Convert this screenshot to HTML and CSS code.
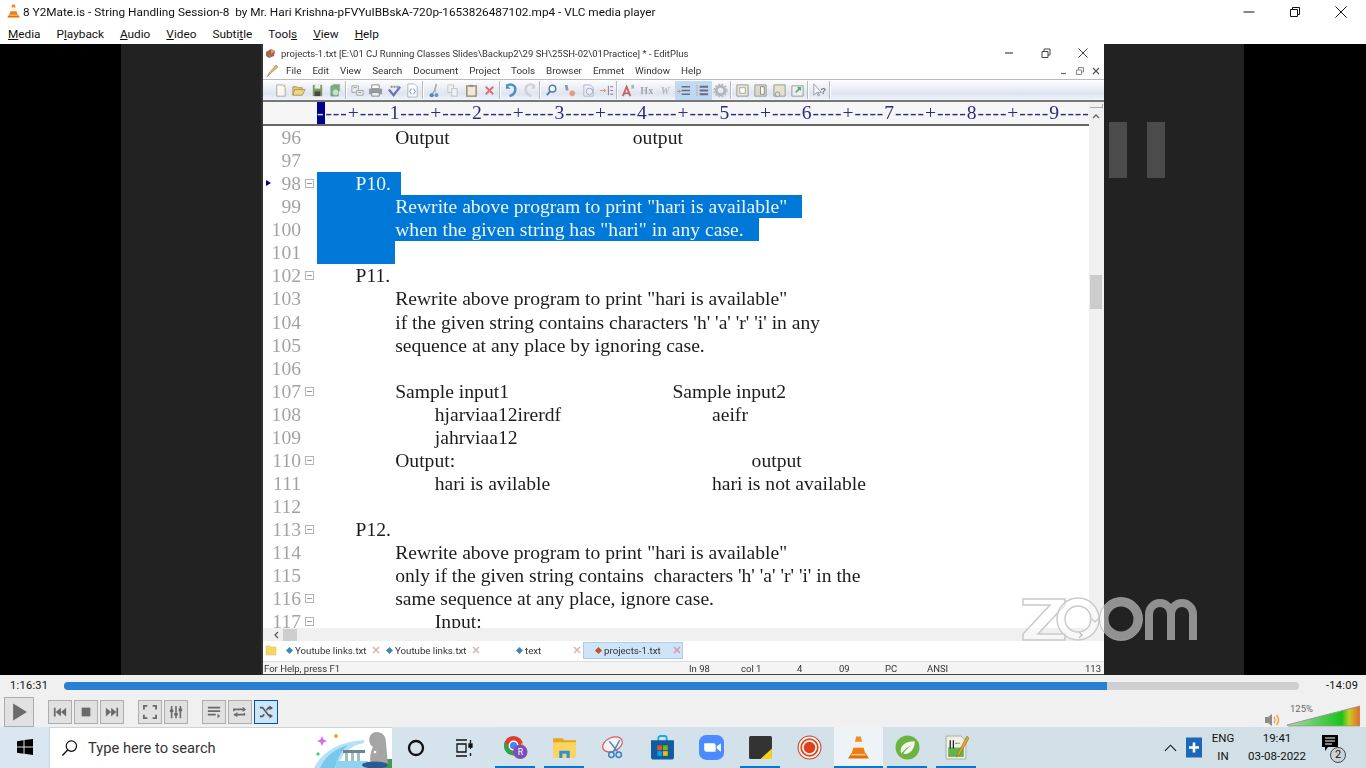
FILE: index.html
```html
<!DOCTYPE html>
<html lang="en">
<head>
<meta charset="utf-8">
<title>VLC media player</title>
<link rel="stylesheet" href="styles.css">
</head>
<body>
<svg class="defs" width="0" height="0" aria-hidden="true">
  <symbol id="vlc" viewBox="0 0 24 24">
    <path d="M9.8 1.5h4.4l1.2 5H8.6z" fill="#f28c1c"/>
    <path d="M8.3 7.5h7.4l1 4.2H7.3z" fill="#f4f1ec"/>
    <path d="M7 12.2h10l1.4 5.3H5.600z" fill="#f07d12"/>
    <path d="M5.300 17.300h13.400l3.300 5.200H2z" fill="#e66f00"/>
    <path d="M5.600 18h12.800l.8 1.600H4.800z" fill="#f6c48e"/>
  </symbol>
  <symbol id="fold" viewBox="0 0 9 9">
    <rect x=".5" y=".5" width="8" height="8" fill="#fff" stroke="#b5b5b5"/>
    <path d="M2 4.500h5" stroke="#999"/>
  </symbol>
</svg>

<header class="titlebar">
  <svg class="vlc-small"><use href="#vlc"/></svg>
  <span class="title">8 Y2Mate.is - String Handling Session-8&nbsp; by Mr. Hari Krishna-pFVYuIBBskA-720p-1653826487102.mp4 - VLC media player</span>
  <div class="winctl">
    <svg viewBox="0 0 12 12"><path d="M.5 6h11" stroke="#111"/></svg>
    <svg viewBox="0 0 12 12" fill="none" stroke="#111"><path d="M1.500 3.500h7v7h-7zM3.500 3.500v-2h7v7h-2"/></svg>
    <svg viewBox="0 0 12 12"><path d="M.5.500l11 11M11.500.500l-11 11" stroke="#111"/></svg>
  </div>
</header>

<nav class="menubar">
  <span><u>M</u>edia</span><span>P<u>l</u>ayback</span><span><u>A</u>udio</span><span><u>V</u>ideo</span><span>Subti<u>t</u>le</span><span>Tool<u>s</u></span><span><u>V</u>iew</span><span><u>H</u>elp</span>
</nav>

<main class="video">
  <div class="pillar"></div>
  <div class="band"></div>

  <section class="editor">
    <div class="ep-title">
      <svg class="ep-ico" viewBox="0 0 12 12"><path d="M1 5l5-3 4 2-1 5-5 2-3-2z" fill="#b9584e"/><path d="M6 2l4 2-4 3z" fill="#d9a05c"/><path d="M2 9l3-2 1 3z" fill="#5f9a57"/></svg>
      <span class="ep-title-text">projects-1.txt [E:\01 CJ Running Classes Slides\Backup2\29 SH\25SH-02\01Practice] * - EditPlus</span>
      <div class="ep-ctl">
        <svg viewBox="0 0 10 10"><path d="M1 5h8" stroke="#444" stroke-width="1.200"/></svg>
        <svg viewBox="0 0 10 10" fill="none" stroke="#444"><path d="M1 3.500h6v6H1zM3 3.500V1h6v6H7"/></svg>
        <svg viewBox="0 0 10 10"><path d="M.5.500l9 9M9.500.500l-9 9" stroke="#444"/></svg>
      </div>
    </div>
    <div class="ep-menu">
      <svg class="pencil" viewBox="0 0 14 14"><path d="M1 13l2-4 7-8 2 2-8 7z" fill="#d8c36a" stroke="#8a8460" stroke-width=".6"/></svg>
      <span>File</span><span>Edit</span><span>View</span><span>Search</span><span>Document</span><span>Project</span><span>Tools</span><span>Browser</span><span>Emmet</span><span>Window</span><span>Help</span>
      <div class="mdi">
        <svg viewBox="0 0 8 8"><path d="M1 6.500h5" stroke="#666" stroke-width="1.200"/></svg>
        <svg viewBox="0 0 8 8" fill="none" stroke="#888"><path d="M.5 3h5v4.500h-5zM2.500 3V.5h5v4.500h-2"/></svg>
        <svg viewBox="0 0 8 8"><path d="M1 1l6 6M7 1L1 7" stroke="#555" stroke-width="1.200"/></svg>
      </div>
    </div>

    <div class="ep-tools">
      <i class="t"><svg viewBox="0 0 16 16"><path d="M4 2h6l3 3v9H4z" fill="#fffdf0" stroke="#999"/><path d="M11 1l1 1 2-1-1 2 1 1-2 0z" fill="#e8b83a"/></svg></i>
      <i class="t"><svg viewBox="0 0 16 16"><path d="M2 13V4h4l1 1h5v2" fill="#e7c25c" stroke="#a58535"/><path d="M2 13l2-6h11l-3 6z" fill="#f1d377" stroke="#a58535"/></svg></i>
      <i class="t"><svg viewBox="0 0 16 16"><path d="M3 2h10v12H3z" fill="#6c8a4c"/><path d="M5 2h6v4H5z" fill="#e9efe0"/><path d="M5 9h6v5H5z" fill="#2b2b2b"/></svg></i>
      <i class="t"><svg viewBox="0 0 16 16"><path d="M5 1h8v8H5z" fill="#86b58a"/><path d="M3 3h8v11H3z" fill="#6aa274" stroke="#3f7550" stroke-width=".5"/><circle cx="8" cy="10" r="3" fill="#c3e0c5"/></svg></i>
      <b class="s"></b>
      <i class="t"><svg viewBox="0 0 16 16" fill="#eee" stroke="#999"><path d="M2 3h7v7H2z"/><path d="M7 8h7v5H7z"/><path d="M4 5h3M9 10h3" stroke="#777"/></svg></i>
      <i class="t"><svg viewBox="0 0 16 16"><path d="M4 2h8v4H4z" fill="#fff" stroke="#777"/><path d="M1 6h14v6H1z" fill="#8a8f96"/><path d="M4 10h8v4H4z" fill="#eee" stroke="#777"/></svg></i>
      <i class="t"><svg viewBox="0 0 16 16"><path d="M2 7l5 6 7-9" fill="none" stroke="#5262a8" stroke-width="2.400"/><path d="M4 4h8" stroke="#777" stroke-width="2" stroke-dasharray="2 1"/></svg></i>
      <i class="t"><svg viewBox="0 0 16 16"><path d="M3 1h7l3 3v11H3z" fill="#fff" stroke="#aaa"/><path d="M7 6L5 9l2 3M9 6l2 3-2 3" fill="none" stroke="#3c78b4"/></svg></i>
      <b class="s"></b>
      <i class="t"><svg viewBox="0 0 16 16"><path d="M10 1L8 8l-3 5" stroke="#999" stroke-width="1.500" fill="none"/><path d="M10 1l-1 8 2 5" stroke="#aab" fill="none"/><circle cx="5" cy="13" r="2.200" fill="#3b72b8"/><circle cx="10" cy="13" r="2" fill="#4a84c8"/></svg></i>
      <i class="t"><svg viewBox="0 0 16 16" fill="#f3f3f3" stroke="#bbb"><path d="M3 2h6v8H3z"/><path d="M7 6h6v8H7z"/></svg></i>
      <i class="t"><svg viewBox="0 0 16 16"><path d="M3 3h10v11H3z" fill="#efe9da" stroke="#8c6d3f" stroke-width="1.400"/><path d="M6 2h4v2H6z" fill="#777"/></svg></i>
      <i class="t"><svg viewBox="0 0 16 16"><path d="M4 4l8 8M12 4l-8 8" stroke="#d85a5a" stroke-width="2"/></svg></i>
      <b class="s"></b>
      <i class="t"><svg viewBox="0 0 16 16"><path d="M3 3c4-3 10-1 9 5-.5 3-3 5-6 6" fill="none" stroke="#2f7fbd" stroke-width="2.600"/><path d="M2 1v5h5z" fill="#2f7fbd"/></svg></i>
      <i class="t"><svg viewBox="0 0 16 16"><path d="M13 3C9 0 3 2 4 8c.5 3 3 5 6 6" fill="none" stroke="#ccc" stroke-width="2.600"/><path d="M14 1v5H9z" fill="#ccc"/></svg></i>
      <b class="s"></b>
      <i class="t"><svg viewBox="0 0 16 16"><circle cx="9" cy="6" r="3.500" fill="#fff" stroke="#2f6f9c" stroke-width="1.600"/><path d="M6.500 9L3 13" stroke="#2f6f9c" stroke-width="2"/></svg></i>
      <i class="t"><svg viewBox="0 0 16 16"><path d="M3 2h3l1 6H4z" fill="#889" /><circle cx="11" cy="11" r="3" fill="#e89070"/></svg></i>
      <i class="t"><svg viewBox="0 0 16 16"><path d="M3 2h7l3 3v9H3z" fill="#eef" stroke="#aab"/><circle cx="9" cy="9" r="3.500" fill="none" stroke="#99a"/></svg></i>
      <i class="t"><svg viewBox="0 0 16 16"><path d="M1 8h6M5 6l2 2-2 2" stroke="#e07a3a" fill="none"/><path d="M10 3v10M12 4h3M12 8h3M12 12h3" stroke="#667" /></svg></i>
      <b class="s"></b>
      <i class="t"><svg viewBox="0 0 16 16"><path d="M2 14L6 4l4 10M3.500 11h5" fill="none" stroke="#c14b4b" stroke-width="2"/><path d="M11 2h3v4h-3z" fill="#9ab"/></svg></i>
      <i class="t tx">Hx</i>
      <i class="t tx tw">W</i>
      <i class="t on"><svg viewBox="0 0 16 16"><path d="M6 4h9M6 8h9M6 12h9" stroke="#556" stroke-width="1.400"/><path d="M1 9h4M3 7l2 2-2 2" stroke="#e07a3a" fill="none"/></svg></i>
      <i class="t on"><svg viewBox="0 0 16 16"><path d="M2 2v12" stroke="#e07a3a" stroke-dasharray="1.500 1"/><path d="M5 3h9v2H5zM5 7h9v2H5zM5 11h9v2H5z" fill="#556"/></svg></i>
      <i class="t"><svg viewBox="0 0 16 16"><circle cx="8" cy="8" r="4.500" fill="none" stroke="#a8adb3" stroke-width="3"/><circle cx="8" cy="8" r="6.800" fill="none" stroke="#a8adb3" stroke-width="1.400" stroke-dasharray="2 1.600"/></svg></i>
      <b class="s"></b>
      <i class="t"><svg viewBox="0 0 16 16"><path d="M2 2h12v12H2z" fill="#e9e6c8" stroke="#888"/><path d="M5 5h6v6H5z" fill="#fff" stroke="#999"/></svg></i>
      <i class="t"><svg viewBox="0 0 16 16"><path d="M2 2h12v12H2z" fill="#d8d8b8" stroke="#888"/><path d="M8 4h4v8H8z" fill="#fff" stroke="#777"/></svg></i>
      <i class="t"><svg viewBox="0 0 16 16"><path d="M2 2h12v12H2z" fill="#e5e2c2" stroke="#888"/><circle cx="6" cy="12" r="2.500" fill="#ddd" stroke="#888"/></svg></i>
      <i class="t"><svg viewBox="0 0 16 16"><path d="M2 3h12v11H2z" fill="#f0f0f0" stroke="#888"/><path d="M6 10l5-5M8 5h3v3" stroke="#36a048" stroke-width="1.600" fill="none"/></svg></i>
      <b class="s"></b>
      <i class="t"><svg viewBox="0 0 16 16"><path d="M2 1v12l3-3 2 4 1-1-2-3h4z" fill="#fff" stroke="#889"/><text x="9" y="12" class="q">?</text></svg></i>
      <b class="s"></b>
    </div>

    <div class="ep-ruler">
      <div class="ruler-main"><div class="ruler-text"><span class="caret">-</span>---+----1----+----2----+----3----+----4----+----5----+----6----+----7----+----8----+----9----</div></div>
      <div class="ruler-side">
        <i class="side-tab"></i>
        <svg class="arrow" viewBox="0 0 8 6"><path d="M1 5l3-3 3 3" fill="none" stroke="#666" stroke-width="1.300"/></svg>
      </div>
    </div>

    <div class="ep-body">
      <div class="code">
        <div class="row"><span class="num">96</span><span class="fd"></span><span class="txt">&#9;&#9;Output&#9;&#9;&#9;&#9;&#9;output</span></div>
        <div class="row"><span class="num">97</span><span class="fd"></span><span class="txt"></span></div>
        <div class="row"><span class="num mark">98</span><span class="fd"><svg><use href="#fold"/></svg></span><span class="txt"><span class="sel s1">&#9;P10.</span></span></div>
        <div class="row"><span class="num">99</span><span class="fd"></span><span class="txt"><span class="sel s2">&#9;&#9;Rewrite above program to print "hari is available"</span></span></div>
        <div class="row"><span class="num">100</span><span class="fd"></span><span class="txt"><span class="sel s2">&#9;&#9;when the given string has "hari" in any case.</span></span></div>
        <div class="row"><span class="num">101</span><span class="fd"></span><span class="txt"><span class="sel">&#9;&#9;</span></span></div>
        <div class="row"><span class="num">102</span><span class="fd"><svg><use href="#fold"/></svg></span><span class="txt">&#9;P11.</span></div>
        <div class="row"><span class="num">103</span><span class="fd"></span><span class="txt">&#9;&#9;Rewrite above program to print "hari is available"</span></div>
        <div class="row"><span class="num">104</span><span class="fd"></span><span class="txt">&#9;&#9;if the given string contains characters 'h' 'a' 'r' 'i' in any</span></div>
        <div class="row"><span class="num">105</span><span class="fd"></span><span class="txt">&#9;&#9;sequence at any place by ignoring case.</span></div>
        <div class="row"><span class="num">106</span><span class="fd"></span><span class="txt"></span></div>
        <div class="row"><span class="num">107</span><span class="fd"><svg><use href="#fold"/></svg></span><span class="txt">&#9;&#9;Sample input1&#9;&#9;&#9;&#9;&#9;Sample input2</span></div>
        <div class="row"><span class="num">108</span><span class="fd"></span><span class="txt">&#9;&#9;&#9;hjarviaa12irerdf&#9;&#9;&#9;&#9;aeifr</span></div>
        <div class="row"><span class="num">109</span><span class="fd"></span><span class="txt">&#9;&#9;&#9;jahrviaa12</span></div>
        <div class="row"><span class="num">110</span><span class="fd"><svg><use href="#fold"/></svg></span><span class="txt">&#9;&#9;Output:&#9;&#9;&#9;&#9;&#9;&#9;&#9;&#9;output</span></div>
        <div class="row"><span class="num">111</span><span class="fd"></span><span class="txt">&#9;&#9;&#9;hari is avilable&#9;&#9;&#9;&#9;&#9;hari is not available</span></div>
        <div class="row"><span class="num">112</span><span class="fd"></span><span class="txt"></span></div>
        <div class="row"><span class="num">113</span><span class="fd"><svg><use href="#fold"/></svg></span><span class="txt">&#9;P12.</span></div>
        <div class="row"><span class="num">114</span><span class="fd"></span><span class="txt">&#9;&#9;Rewrite above program to print "hari is available"</span></div>
        <div class="row"><span class="num">115</span><span class="fd"></span><span class="txt">&#9;&#9;only if the given string contains&nbsp; characters 'h' 'a' 'r' 'i' in the</span></div>
        <div class="row"><span class="num">116</span><span class="fd"><svg><use href="#fold"/></svg></span><span class="txt">&#9;&#9;same sequence at any place, ignore case.</span></div>
        <div class="row"><span class="num">117</span><span class="fd"><svg><use href="#fold"/></svg></span><span class="txt">&#9;&#9;&#9;Input:</span></div>
      </div>
      <div class="vscroll">
        <div class="vthumb"></div>
        <svg class="arrow down" viewBox="0 0 8 6"><path d="M1 1l3 3 3-3" fill="none" stroke="#888" stroke-width="1.200"/></svg>
      </div>
    </div>

    <div class="hscroll">
      <svg class="harrow" viewBox="0 0 6 8"><path d="M5 1L2 4l3 3" fill="none" stroke="#555" stroke-width="1.200"/></svg>
      <div class="hthumb"></div>
      <svg class="harrow right" viewBox="0 0 6 8"><path d="M1 1l3 3-3 3" fill="none" stroke="#777" stroke-width="1.200"/></svg>
    </div>

    <div class="ep-tabs">
      <svg class="tabfolder" viewBox="0 0 12 12"><path d="M1 11V2h4l1 1h5v8z" fill="#f4d766" stroke="#d9b94a" stroke-width=".5"/></svg>
      <div class="tab t1"><i class="dia"></i><span>Youtube links.txt</span><svg class="x" viewBox="0 0 8 8"><path d="M1 1l6 6M7 1L1 7" stroke="#dcb4b4" stroke-width="1.600"/></svg></div>
      <div class="tab t2"><i class="dia"></i><span>Youtube links.txt</span><svg class="x" viewBox="0 0 8 8"><path d="M1 1l6 6M7 1L1 7" stroke="#dcb4b4" stroke-width="1.600"/></svg></div>
      <div class="tab t3"><i class="dia"></i><span>text</span><svg class="x" viewBox="0 0 8 8"><path d="M1 1l6 6M7 1L1 7" stroke="#dcb4b4" stroke-width="1.600"/></svg></div>
      <div class="tab t4"><i class="dia red"></i><span>projects-1.txt</span><svg class="x" viewBox="0 0 8 8"><path d="M1 1l6 6M7 1L1 7" stroke="#d99aa8" stroke-width="1.600"/></svg></div>
    </div>

    <div class="ep-status">
      <span class="help">For Help, press F1</span>
      <span class="c c1">In 98</span><span class="c c2">col 1</span><span class="c c3">4</span><span class="c c4">09</span><span class="c c5">PC</span><span class="c c6">ANSI</span><span class="c c7"></span><span class="c c8">113</span>
    </div>
  </section>

  <div class="band band-r">
    <i class="pausebar"></i><i class="pausebar"></i>
  </div>
  <div class="pillar pillar-r"></div>

  <svg class="zoomlogo" viewBox="0 0 178 46">
    <path d="M2 2h42v6L17 37h27v6H2v-6L29 8H2z" fill="#fff" fill-opacity=".45" stroke="#c9c9c9" stroke-width="1.500"/>
    <circle cx="57" cy="22" r="17" fill="none" stroke="#fff" stroke-opacity=".5" stroke-width="8"/>
    <circle cx="57" cy="22" r="21" fill="none" stroke="#c9c9c9" stroke-width="1.400"/>
    <circle cx="57" cy="22" r="13" fill="none" stroke="#c9c9c9" stroke-width="1.400"/>
    <circle cx="100" cy="22" r="17" fill="none" stroke="#fff" stroke-opacity=".5" stroke-width="9"/>
    <circle cx="100" cy="22" r="21.500" fill="none" stroke="#aaa" stroke-opacity=".7" stroke-width="1"/>
    <path d="M128 43V17a11 11 0 0 1 22 0v26M150 17a11 11 0 0 1 22 0v26" fill="none" stroke="#909090" stroke-width="8"/>
  </svg>
</main>

<section class="controls">
  <div class="seek">
    <span class="time">1:16:31</span>
    <div class="bar"><div class="bar-fill"></div></div>
    <span class="time remain">-14:09</span>
  </div>
  <div class="btns">
    <button class="b play"><svg viewBox="0 0 16 16"><path d="M2 0l13 8-13 8z" fill="#6a6a6a"/></svg></button>
    <div class="grp">
      <button class="b"><svg viewBox="0 0 16 16"><path d="M1 3h2v10H1zM9 3v10L3 8zM15 3v10L9 8z" fill="#6a6a6a"/></svg></button>
      <button class="b"><svg viewBox="0 0 16 16"><path d="M3 3h10v10H3z" fill="#6a6a6a"/></svg></button>
      <button class="b"><svg viewBox="0 0 16 16"><path d="M13 3h2v10h-2zM1 3v10l6-5zM7 3v10l6-5z" fill="#6a6a6a"/></svg></button>
    </div>
    <div class="grp">
      <button class="b"><svg viewBox="0 0 16 16"><path d="M1 5V1h4M11 1h4v4M15 11v4h-4M5 15H1v-4" fill="none" stroke="#6a6a6a" stroke-width="2.200"/></svg></button>
      <button class="b"><svg viewBox="0 0 16 16"><path d="M3 1v14M8 1v14M13 1v14" stroke="#6a6a6a" stroke-width="1.800"/><path d="M1 5h4v3H1zM6 9h4v3H6zM11 4h4v3h-4z" fill="#6a6a6a"/></svg></button>
    </div>
    <div class="grp">
      <button class="b"><svg viewBox="0 0 16 16"><path d="M1 3h14M1 7h14M1 11h9" stroke="#6a6a6a" stroke-width="1.800"/><path d="M12 10v5l3-2.500z" fill="#6a6a6a"/></svg></button>
      <button class="b"><svg viewBox="0 0 16 16"><path d="M1 7V5h11M1 11h12V9" fill="none" stroke="#6a6a6a" stroke-width="1.800"/><path d="M11 2l4 3-4 3zM5 8l-4 3 4 3z" fill="#6a6a6a"/></svg></button>
      <button class="b active"><svg viewBox="0 0 16 16"><path d="M1 3h3l7 9h2M1 13h3l2-2.500M8.500 6L11 3h2" fill="none" stroke="#555" stroke-width="1.800"/><path d="M12 .5l4 3-4 2.500zM12 10l4 2.500-4 3z" fill="#555"/></svg></button>
    </div>
    <div class="vol">
      <svg class="spk" viewBox="0 0 16 16"><path d="M1 5h3l4-3v12l-4-3H1z" fill="#8c8c8c"/><path d="M10 5c1.500 2 1.500 4 0 6M12.500 3c2.500 3 2.500 7 0 10" fill="none" stroke="#f19a2a" stroke-width="1.300"/></svg>
      <div class="volbar"><span class="volpct">125%</span><svg class="voltri" viewBox="0 0 73 22" preserveAspectRatio="none">
        <defs><linearGradient id="vg" x1="0" x2="1" y1="0" y2="0"><stop offset="0" stop-color="#a9dcab"/><stop offset=".75" stop-color="#1cc21c"/><stop offset=".85" stop-color="#c2cf24"/><stop offset="1" stop-color="#f0641e"/></linearGradient></defs>
        <path d="M0 20L73 1v20H1z" fill="url(#vg)" stroke="#999"/></svg></div>
    </div>
  </div>
</section>

<footer class="taskbar">
  <div class="start"><svg viewBox="0 0 16 16"><path d="M0 2.300l6.500-1v6.300H0zM7.500 1.100L16 0v7.600H7.500zM0 8.500h6.500v6.200l-6.500-1zM7.500 8.500H16V16l-8.500-1.200z" fill="#000"/></svg></div>
  <div class="search">
    <svg class="glass" viewBox="0 0 18 18"><circle cx="11" cy="7" r="5.500" fill="none" stroke="#111" stroke-width="1.300"/><path d="M7 11.200L1.500 17" stroke="#111" stroke-width="1.500"/></svg>
    <span class="search-text">Type here to search</span>
    <svg class="banner" viewBox="0 0 78 40">
      <path d="M0 40C8 24 24 14 50 12v3C34 18 26 28 24 40z" fill="#b4e2f4"/>
      <path d="M6 40c5-11 14-19 28-23-7 6-11 14-13 23z" fill="#78c8ee"/>
      <path d="M8 8l1.500 3.500L13 13l-3.500 1.500L8 18l-1.500-3.500L3 13l3.500-1.500z" fill="#d46df0"/>
      <circle cx="22" cy="8" r="2" fill="#f5a623"/><circle cx="4" cy="26" r="1.700" fill="#55d07c"/>
      <path d="M29 22h22v3H29z" fill="#6d8593"/><path d="M31 25h3v8h-3zM37 25h3v8h-3zM43 25h3v8h-3z" fill="#a7bbc6"/>
      <path d="M22 33h32v7H22z" fill="#8fd3f0"/>
      <path d="M66 31h12v9H66z" fill="#3f9a52"/>
      <path d="M57 37c-2-8 0-14 2-18-3-2-5-6-3-11 2-4 7-5 11-3 4 2 5 6 5 10l2 22z" fill="#a5a5a5"/>
      <ellipse cx="61" cy="37" rx="13" ry="3.500" fill="#2c5a92"/><circle cx="61" cy="24" r="1.300" fill="#fff"/>
    </svg>
  </div>
  <div class="slot wide"><svg class="ring" viewBox="0 0 18 18"><circle cx="9" cy="9" r="7" fill="none" stroke="#111" stroke-width="2.300"/></svg></div>
  <div class="slot wide"><svg class="ticon" viewBox="0 0 18 18" fill="none" stroke="#111" stroke-width="1.300"><path d="M1 1h11M1 17h11M2 5h9v8H2z"/><path d="M15.500 1v3M15.500 14v3M15.500 8v2" stroke-width="1.300"/><path d="M14 5h3v3h-3z" fill="#111"/></svg></div>
  <div class="apps">
    <div class="slot u">
      <svg viewBox="0 0 26 26"><circle cx="11" cy="11" r="10" fill="#e33b2e"/><path d="M20 7a10 10 0 0 1-7 13.800L17 13z" fill="#f9c513"/><path d="M13 21A10 10 0 0 1 2.300 6.500L7 14z" fill="#2fa44f"/><circle cx="11" cy="11" r="4.500" fill="#4285f4" stroke="#fff" stroke-width="1.500"/><circle cx="18" cy="17.500" r="7.500" fill="#7b4fb5"/><text x="18" y="21" class="badge">R</text></svg>
    </div>
    <div class="slot u">
      <svg viewBox="0 0 24 24"><path d="M1 3h9l2 2h11v3H1z" fill="#e5a620"/><path d="M1 7h22v15H1z" fill="#fcd462"/><path d="M7 15h10v7h-3v-4h-4v4H7z" fill="#2f8fd8"/></svg>
    </div>
    <div class="slot">
      <svg viewBox="0 0 24 24"><ellipse cx="11" cy="9" rx="10" ry="6.500" fill="#f3f3f3" stroke="#e15a5a" stroke-width="1.200" transform="rotate(-25 11 9)"/><path d="M8 6l8 10M18 5l-6 11" stroke="#4d86c2" stroke-width="1.400"/><circle cx="17" cy="19" r="2.600" fill="none" stroke="#3a7fc4" stroke-width="1.400"/><circle cx="10" cy="19" r="2.600" fill="none" stroke="#3a7fc4" stroke-width="1.400"/></svg>
    </div>
    <div class="slot">
      <svg viewBox="0 0 24 24"><path d="M8 6V3a2 2 0 0 1 2-2h4a2 2 0 0 1 2 2v3" fill="none" stroke="#1fa7e0" stroke-width="1.800"/><path d="M1 5h22v16a2.500 2.500 0 0 1-2.500 2.500h-17A2.500 2.500 0 0 1 1 21z" fill="#0f5c9e"/><path d="M7 10h4.500v4.500H7z" fill="#f25022"/><path d="M12.500 10H17v4.500h-4.500z" fill="#7fba00"/><path d="M7 15.500h4.500V20H7z" fill="#00a4ef"/><path d="M12.500 15.500H17V20h-4.500z" fill="#ffb900"/></svg>
    </div>
    <div class="slot">
      <svg viewBox="0 0 24 24"><rect width="24" height="24" rx="7" fill="#4a8cff"/><path d="M5 8h9a2 2 0 0 1 2 2v6H7a2 2 0 0 1-2-2z" fill="#fff"/><path d="M17 11l4-3v8l-4-3z" fill="#fff"/></svg>
    </div>
    <div class="slot u">
      <svg viewBox="0 0 24 24"><rect x="1" y="1" width="22" height="22" rx="1.500" fill="#333"/><path d="M23 13v10H12z" fill="#f7d21c"/></svg>
    </div>
    <div class="slot">
      <svg viewBox="0 0 24 24"><circle cx="12" cy="12" r="11" fill="#f5f1ee" stroke="#c9452a" stroke-width="1"/><circle cx="12" cy="12" r="8" fill="none" stroke="#d64a23" stroke-width="1.600"/><circle cx="12" cy="12" r="5.500" fill="#e2401a"/></svg>
    </div>
    <div class="slot u cur"><svg viewBox="0 0 24 24"><use href="#vlc"/></svg></div>
    <div class="slot u">
      <svg viewBox="0 0 24 24"><circle cx="12" cy="12" r="11.500" fill="#6db33f"/><path d="M6 18c-2-6 2-12 13-12 0 8-5 13-11 12 2-4 5-6 8-8-4 1-7 4-10 8z" fill="#f4f9ee"/></svg>
    </div>
    <div class="slot u">
      <svg viewBox="0 0 24 24"><path d="M2 1h14l5 4v18H2z" fill="#eef0e4" stroke="#999" stroke-width=".7"/><path d="M4 12h15v9H4z" fill="#62b34b"/><path d="M6 5v8M9 5v8" stroke="#222" stroke-width="1.200"/><path d="M11 8h2M14 8h1" stroke="#555"/><path d="M22 1l-9 17-1 3 3-2 9-16z" fill="#e8a62a" stroke="#8a5c10" stroke-width=".5"/></svg>
    </div>
  </div>
  <div class="tray">
    <svg class="chev" viewBox="0 0 14 8"><path d="M1 7l6-6 6 6" fill="none" stroke="#111" stroke-width="1.200"/></svg>
    <svg class="plus" viewBox="0 0 16 20"><rect width="16" height="20" fill="#1c68b8"/><path d="M8 5v10M3 10h10" stroke="#fff" stroke-width="2.600"/></svg>
    <div class="lang"><span>ENG</span><span>IN</span></div>
    <div class="clock"><span>19:41</span><span>03-08-2022</span></div>
    <div class="notif">
      <svg class="bubble" viewBox="0 0 16 17"><path d="M0 0h16v12H6l-3 4v-4H0z" fill="#000"/><path d="M3 3h10M3 6h10M3 9h7" stroke="#fff"/></svg>
      <span class="count">2</span>
    </div>
  </div>
</footer>
</body>
</html>
```
FILE: styles.css
```css
* { box-sizing: border-box; }
html, body { margin: 0; padding: 0; }
body {
  width: 1366px;
  height: 768px;
  overflow: hidden;
  background: #f0f0f0;
  font-family: "Roboto", "Liberation Sans", sans-serif;
  color: #111;
  display: flex;
  flex-direction: column;
}
.defs { position: absolute; }
svg { display: block; }
i, b { font-style: normal; font-weight: normal; }

/* VLC title and menu */
.titlebar {
  height: 22px;
  background: #fff;
  display: flex;
  align-items: center;
  padding: 1px 0 0 6px;
  font-size: 11.800px;
  flex: none;
}
.vlc-small { width: 15px; height: 16px; margin-right: 2px; margin-top: -2px; }
.title { white-space: pre; filter: blur(.2px); }
.winctl { margin-left: auto; display: flex; gap: 34px; padding-right: 19px; }
.winctl svg { width: 12px; height: 12px; }
.menubar {
  height: 22px;
  background: #fff;
  display: flex;
  align-items: center;
  gap: 16px;
  padding: 1px 0 0 8px;
  font-size: 11.800px;
  flex: none;
}

/* video surface */
.video {
  height: 631px;
  flex: none;
  display: flex;
  background: #000;
  position: relative;
}
.pillar { width: 121px; background: #000; flex: none; }
.pillar-r { width: 122px; }
.band { width: 140px; background: #222; flex: none; }
.band-r {
  width: 140px;
  display: flex;
  gap: 20px;
  padding: 78px 0 0 5px;
  align-items: flex-start;
}
.pausebar { width: 18px; height: 56px; background: #4b4b4b; }

.editor {
  width: 843px;
  flex: none;
  display: flex;
  flex-direction: column;
  background: #fff;
  border-left: 2px solid #333;
  filter: blur(.35px);
  overflow: hidden;
  color: #333;
  font-size: 10px;
}
.ep-title {
  height: 18px;
  flex: none;
  display: flex;
  align-items: center;
  padding-left: 2px;
}
.ep-ico { width: 12px; height: 12px; margin-right: 4px; }
.ep-title-text { font-size: 9.500px; white-space: pre; }
.ep-ctl { margin-left: auto; display: flex; gap: 27px; padding-right: 16px; }
.ep-ctl svg { width: 10px; height: 10px; }
.ep-menu {
  height: 18px;
  flex: none;
  display: flex;
  align-items: center;
  gap: 11px;
  padding-left: 3px;
  font-size: 9.800px;
  border-bottom: 1px solid #bbb;
}
.pencil { width: 14px; height: 14px; margin-right: -5px; }
.mdi { margin-left: auto; display: flex; gap: 8px; padding-right: 4px; }
.mdi svg { width: 8px; height: 8px; }
.ep-tools {
  height: 22px;
  flex: none;
  display: flex;
  align-items: center;
  padding-left: 8px;
  background: linear-gradient(#fdfdfe, #e4e9f3 55%, #dfe5f0 70%, #f1f4f9);
  border-bottom: 2px solid #777;
}
.t {
  width: 18.500px;
  height: 19px;
  flex: none;
  display: flex;
  align-items: center;
  justify-content: center;
  opacity: .85;
}
.t svg { width: 15px; height: 15px; }
.t.on { background: #b8d6f5; }
.tx { font-family: "Liberation Serif", serif; font-size: 10px; font-weight: bold; color: #999; }
.tw { font-style: italic; color: #aaa; }
.q { font: bold 10px "Liberation Sans", sans-serif; fill: #667; }
.s { width: 3px; height: 18px; flex: none; background: linear-gradient(90deg, #b5b9c0 1px, #fff 1px, #fff 2px, transparent 2px); }
.ep-ruler { height: 24px; flex: none; display: flex; }
.ruler-main {
  flex: 1;
  min-width: 0;
  background: #f6f6f6;
  padding-left: 54px;
  border-bottom: 2px solid #666;
  overflow: hidden;
}
.ruler-side { width: 15px; flex: none; background: #f0f0f0; padding: 2px 0 0 1px; }
.side-tab { display: block; width: 13px; height: 4px; border: 1px solid #aaa; border-top: 0; border-left: 0; }
.ruler-text {
  font-family: "Liberation Serif", serif;
  font-size: 19.600px;
  letter-spacing: .94px;
  line-height: 22px;
  color: #2b2b85;
  white-space: pre;
}
.caret { display: inline-block; width: 8.400px; height: 22px; background: #00008b; vertical-align: top; color: #dde; }

.ep-body { flex: 1; min-height: 0; display: flex; overflow: hidden; }
.code { flex: 1; min-width: 0; overflow: hidden; }
.row {
  display: flex;
  height: 23.070px;
  line-height: 23.070px;
  font-family: "Liberation Serif", serif;
  font-size: 19.600px;
  white-space: pre;
}
.num {
  width: 38px;
  flex: none;
  text-align: right;
  color: #a3a3a3;
  position: relative;
}
.mark::before {
  content: "";
  position: absolute;
  left: 3px;
  top: 8px;
  border-left: 5px solid #00008b;
  border-top: 3.500px solid transparent;
  border-bottom: 3.500px solid transparent;
}
.fd { width: 15px; flex: none; display: flex; align-items: center; padding-left: 4px; }
.fd svg { width: 9px; height: 9px; }
.txt { flex: 1; tab-size: 39.600px; color: #1c1c1c; overflow: hidden; }
.sel {
  display: inline-block;
  height: 23.070px;
  background: linear-gradient(90deg, transparent 1px, #0078d7 1px);
  color: #eef5fc;
  vertical-align: top;
  tab-size: 39.600px;
}
.s1 { padding-right: 10px; }
.s2 { padding-right: 15px; }

.vscroll { width: 15px; flex: none; background: #f0f0f0; display: flex; flex-direction: column; }
.arrow { width: 8px; height: 6px; margin: 5px 0 0 2px; }
.arrow.down { margin: auto 0 4px 2px; }
.vthumb { width: 12px; height: 34px; background: #cdcdcd; margin: 149px 0 0 1px; }
.hscroll {
  height: 13px;
  flex: none;
  background: #f0f0f0;
  display: flex;
  align-items: center;
  padding: 0 20px 0 10px;
}
.harrow { width: 6px; height: 8px; }
.harrow.right { margin-left: auto; }
.hthumb { width: 14px; height: 12px; background: #cdcdcd; margin-left: 4px; }
.ep-tabs {
  height: 20px;
  flex: none;
  display: flex;
  align-items: center;
  background: #fff;
  padding: 0 0 2px 2px;
  font-size: 9.700px;
}
.tabfolder { width: 12px; height: 12px; margin-right: 9px; flex: none; }
.tab { display: flex; align-items: center; height: 17px; flex: none; white-space: nowrap; }
.dia { width: 5px; height: 5px; background: #3f87b8; transform: rotate(45deg); margin-right: 3px; flex: none; }
.dia.red { background: #c8502e; }
.x { width: 8px; height: 8px; flex: none; }
.t1 { width: 99px; padding-left: 1px; }
.t1 .x { margin-left: 5px; }
.t2 { width: 128px; padding-left: 2px; }
.t2 .x { margin-left: 5px; }
.t3 { width: 70px; padding-left: 4px; }
.t3 .x { margin-left: 32px; }
.t4 { width: 100px; padding-left: 12px; background: #cfe4f8; border: 1px solid #a9cdee; }
.t4 .x { margin-left: 12px; }
.ep-status {
  height: 14px;
  flex: none;
  display: flex;
  align-items: center;
  border-top: 1px solid #ddd;
  border-bottom: 1px solid #444;
  background: #f4f4f4;
  font-size: 9.500px;
  padding-left: 1px;
}
.help { width: 425px; flex: none; }
.c { flex: none; }
.c1 { width: 52px; }
.c2 { width: 56px; }
.c3 { width: 42px; }
.c4 { width: 46px; }
.c5 { width: 42px; }
.c6 { width: 38px; }
.c7 { width: 118px; }
.c8 { width: 18px; text-align: right; }

.zoomlogo { position: absolute; left: 1021px; top: 553px; width: 178px; height: 46px; }

/* player controls */
.controls { height: 52px; flex: none; background: #f0f0f0; }
.seek { display: flex; align-items: center; height: 21px; padding: 0 8px 0 10px; font-size: 11px; }
.time { width: 54px; flex: none; letter-spacing: .3px; }
.remain { width: 27px; margin-left: 27px; white-space: nowrap; }
.bar { width: 1235px; height: 8px; background: #cfcfcf; border-radius: 4px; overflow: hidden; flex: none; }
.bar-fill { width: 1043px; height: 8px; background: #2a7ed3; }
.btns { display: flex; align-items: center; height: 31px; padding: 0 6px 0 4px; }
.b {
  width: 24px;
  height: 24px;
  padding: 0;
  background: #e1e1e1;
  border: 1px solid #adadad;
  display: flex;
  align-items: center;
  justify-content: center;
}
.b svg { width: 14px; height: 14px; }
.play { width: 30px; height: 30px; margin-right: 14px; }
.play svg { width: 17px; height: 20px; }
.grp { display: flex; gap: 2px; margin-right: 14px; }
.active { background: #cce4f7; border-color: #005499; }
.vol { margin-left: auto; display: flex; align-items: flex-end; height: 30px; }
.spk { width: 16px; height: 16px; margin-right: 7px; margin-bottom: -1px; }
.volbar { width: 73px; height: 24px; position: relative; }
.voltri { width: 73px; height: 22px; position: absolute; left: 0; bottom: 0; }
.volpct { position: absolute; left: 3px; top: 0; font-size: 9.500px; color: #666; z-index: 1; }

/* taskbar */
.taskbar {
  height: 41px;
  flex: none;
  display: flex;
  align-items: stretch;
  background: linear-gradient(90deg, #d8e7f0, #d3e2ea 50%, #d1dfe6);
}
.start { width: 49px; flex: none; display: flex; align-items: center; justify-content: center; padding-bottom: 2px; }
.start svg { width: 16px; height: 16px; }
.search {
  width: 343px;
  flex: none;
  background: #fff;
  border: 1px solid #c9d4db;
  border-width: 1px 0 0 1px;
  display: flex;
  align-items: center;
  padding-left: 11px;
  color: #333;
}
.glass { width: 17px; height: 18px; margin-right: 10px; }
.search-text { font-size: 14.700px; }
.banner { margin-left: auto; width: 78px; height: 40px; }
.slot {
  width: 49px;
  flex: none;
  display: flex;
  align-items: center;
  justify-content: center;
  position: relative;
}
.slot svg { width: 25px; height: 25px; }
.slot.wide { width: 48px; }
.slot.wide svg { width: 18px; height: 18px; }
.apps { display: flex; padding-left: 3px; }
.u::after {
  content: "";
  position: absolute;
  left: 4px;
  right: 5px;
  bottom: 0;
  height: 2px;
  background: #0078d7;
}
.cur { background: #edf3f6; }
.cur::after { left: 0; right: 0; }
.badge { font: 9px "Roboto", sans-serif; fill: #fff; text-anchor: middle; }
.tray { margin-left: auto; display: flex; align-items: center; font-size: 11.500px; padding-right: 21px; white-space: nowrap; }
.chev { width: 13px; height: 8px; margin-right: 9px; }
.plus { width: 16px; height: 21px; margin-right: 9px; }
.lang { display: flex; flex-direction: column; align-items: center; gap: 3px; width: 24px; margin-right: 14px; line-height: 15px; }
.clock { display: flex; flex-direction: column; align-items: center; gap: 3px; width: 56px; margin-right: 17px; line-height: 15px; }
.notif { width: 23px; height: 26px; position: relative; }
.bubble { width: 16px; height: 17px; }
.count {
  position: absolute;
  right: -1px;
  bottom: -2px;
  width: 16px;
  height: 16px;
  border-radius: 50%;
  background: #ccd3d6;
  border: 1px solid #444;
  font-size: 11px;
  line-height: 14px;
  text-align: center;
}
```
